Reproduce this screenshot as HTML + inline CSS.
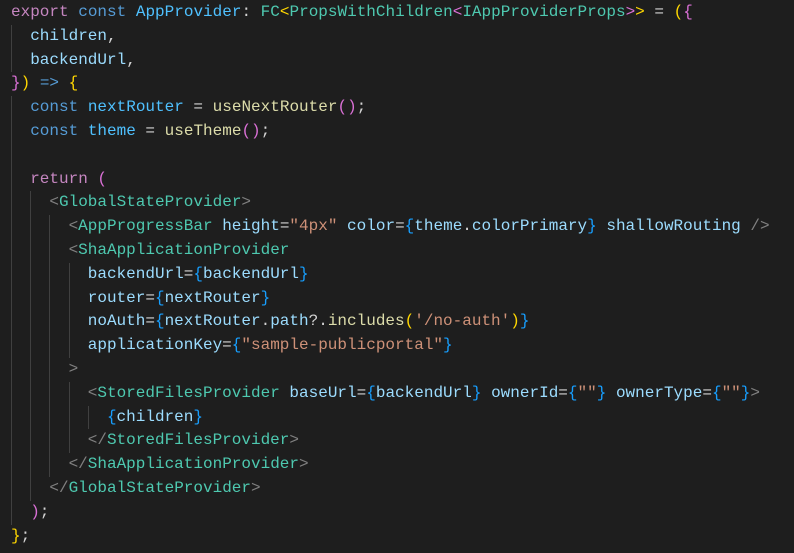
<!DOCTYPE html>
<html><head><meta charset="utf-8"><style>
html,body{margin:0;padding:0;background:#1e1e1e;width:794px;height:553px;overflow:hidden}
#c{position:absolute;left:11px;top:1px;font-family:"Liberation Mono",monospace;font-size:16px;color:#d4d4d4}
.l{height:23.8px;line-height:23.8px;white-space:pre}
.g{display:inline-block;width:19.2px;height:23.8px;vertical-align:top;box-shadow:inset 1px 0 #404040}
.k{color:#c586c0}.s{color:#569cd6}.c{color:#4fc1ff}.v{color:#9cdcfe}.t{color:#4ec9b0}.f{color:#dcdcaa}.q{color:#ce9178}.p{color:#808080}
.y{color:#ffd700}.m{color:#da70d6}.b{color:#179fff}
</style></head><body><div id="c"><div class="l"><span class="k">export</span> <span class="s">const</span> <span class="c">AppProvider</span>: <span class="t">FC</span><span class="y">&lt;</span><span class="t">PropsWithChildren</span><span class="m">&lt;</span><span class="t">IAppProviderProps</span><span class="m">&gt;</span><span class="y">&gt;</span> = <span class="y">(</span><span class="m">{</span></div><div class="l"><span class="g"></span><span class="v">children</span>,</div><div class="l"><span class="g"></span><span class="v">backendUrl</span>,</div><div class="l"><span class="m">}</span><span class="y">)</span> <span class="s">=&gt;</span> <span class="y">{</span></div><div class="l"><span class="g"></span><span class="s">const</span> <span class="c">nextRouter</span> = <span class="f">useNextRouter</span><span class="m">()</span>;</div><div class="l"><span class="g"></span><span class="s">const</span> <span class="c">theme</span> = <span class="f">useTheme</span><span class="m">()</span>;</div><div class="l"><span class="g"></span></div><div class="l"><span class="g"></span><span class="k">return</span> <span class="m">(</span></div><div class="l"><span class="g"></span><span class="g"></span><span class="p">&lt;</span><span class="t">GlobalStateProvider</span><span class="p">&gt;</span></div><div class="l"><span class="g"></span><span class="g"></span><span class="g"></span><span class="p">&lt;</span><span class="t">AppProgressBar</span> <span class="v">height</span>=<span class="q">"4px"</span> <span class="v">color</span>=<span class="b">{</span><span class="v">theme</span>.<span class="v">colorPrimary</span><span class="b">}</span> <span class="v">shallowRouting</span> <span class="p">/&gt;</span></div><div class="l"><span class="g"></span><span class="g"></span><span class="g"></span><span class="p">&lt;</span><span class="t">ShaApplicationProvider</span></div><div class="l"><span class="g"></span><span class="g"></span><span class="g"></span><span class="g"></span><span class="v">backendUrl</span>=<span class="b">{</span><span class="v">backendUrl</span><span class="b">}</span></div><div class="l"><span class="g"></span><span class="g"></span><span class="g"></span><span class="g"></span><span class="v">router</span>=<span class="b">{</span><span class="v">nextRouter</span><span class="b">}</span></div><div class="l"><span class="g"></span><span class="g"></span><span class="g"></span><span class="g"></span><span class="v">noAuth</span>=<span class="b">{</span><span class="v">nextRouter</span>.<span class="v">path</span>?.<span class="f">includes</span><span class="y">(</span><span class="q">'/no-auth'</span><span class="y">)</span><span class="b">}</span></div><div class="l"><span class="g"></span><span class="g"></span><span class="g"></span><span class="g"></span><span class="v">applicationKey</span>=<span class="b">{</span><span class="q">"sample-publicportal"</span><span class="b">}</span></div><div class="l"><span class="g"></span><span class="g"></span><span class="g"></span><span class="p">&gt;</span></div><div class="l"><span class="g"></span><span class="g"></span><span class="g"></span><span class="g"></span><span class="p">&lt;</span><span class="t">StoredFilesProvider</span> <span class="v">baseUrl</span>=<span class="b">{</span><span class="v">backendUrl</span><span class="b">}</span> <span class="v">ownerId</span>=<span class="b">{</span><span class="q">""</span><span class="b">}</span> <span class="v">ownerType</span>=<span class="b">{</span><span class="q">""</span><span class="b">}</span><span class="p">&gt;</span></div><div class="l"><span class="g"></span><span class="g"></span><span class="g"></span><span class="g"></span><span class="g"></span><span class="b">{</span><span class="v">children</span><span class="b">}</span></div><div class="l"><span class="g"></span><span class="g"></span><span class="g"></span><span class="g"></span><span class="p">&lt;/</span><span class="t">StoredFilesProvider</span><span class="p">&gt;</span></div><div class="l"><span class="g"></span><span class="g"></span><span class="g"></span><span class="p">&lt;/</span><span class="t">ShaApplicationProvider</span><span class="p">&gt;</span></div><div class="l"><span class="g"></span><span class="g"></span><span class="p">&lt;/</span><span class="t">GlobalStateProvider</span><span class="p">&gt;</span></div><div class="l"><span class="g"></span><span class="m">)</span>;</div><div class="l"><span class="y">}</span>;</div></div></body></html>
